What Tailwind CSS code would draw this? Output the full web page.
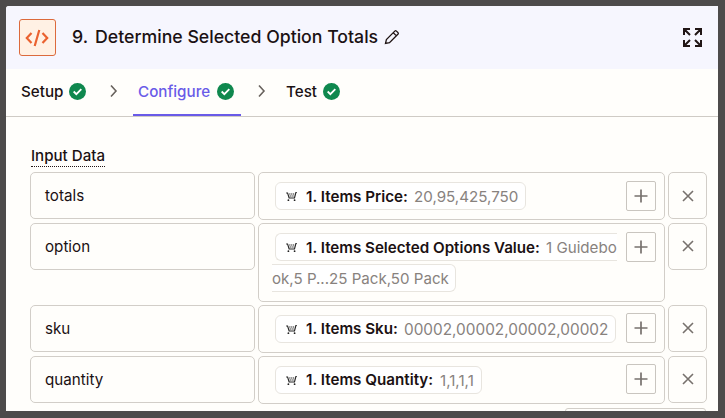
<!DOCTYPE html>
<html lang="en">
<head>
<meta charset="utf-8">
<title>Determine Selected Option Totals</title>
<script src="https://cdn.jsdelivr.net/npm/@tailwindcss/browser@4"></script>
</head>
<body class="bg-[#4d4b4b] font-['Inter',sans-serif] text-[#1b1113]">
<svg class="hidden">
  <symbol id="check" viewBox="0 0 16 16"><circle cx="8" cy="8" r="8" fill="#0f884e"/><path d="M4.4 8l2.5 2.5 4.7-4.7" fill="none" stroke="#fff" stroke-width="1.7"/></symbol>
  <symbol id="chev" viewBox="0 0 8 14"><path d="M1 1.5L6 7l-5 5.5" fill="none" stroke="#68625d" stroke-width="1.6"/></symbol>
  <symbol id="cart" viewBox="0 0 12 12"><path d="M.2 3h1.4l1.5 5h5.4l1.4-5.5h.9" fill="none" stroke="#222" stroke-width="1.1"/><path d="M3.2 4h5M3.6 6h4.6" stroke="#222" stroke-width="1.2" stroke-dasharray="1.3 .6"/><circle cx="2.4" cy="10.2" r=".9" fill="#222"/><circle cx="8.6" cy="10.2" r=".9" fill="#222"/></symbol>
  <symbol id="plus" viewBox="0 0 14 14"><path d="M7 .5v13M.5 7h13" stroke="#77716d" stroke-width="1.7"/></symbol>
  <symbol id="cross" viewBox="0 0 12 12"><path d="M1 1l10 10M11 1L1 11" stroke="#77716d" stroke-width="1.6"/></symbol>
</svg>
<div class="w-[725px] h-[418px] overflow-hidden p-[6px]">
<main class="w-[712px] h-[405px] overflow-hidden bg-[#fffefb] rounded-tl-[3px]">
  <header class="h-[63px] bg-[#f6f6fe] flex items-center pl-[13px] pr-[16px]">
    <div class="w-[37px] h-[37px] rounded-[3px] border border-[#dc6a3c] bg-[#fff1e4] flex items-center justify-center pr-px">
      <svg class="w-6 h-[18px]" viewBox="0 0 24 18" fill="none" stroke="#ea6230" stroke-width="2.2"><path d="M6.5 4L1.8 9l4.7 5M17.5 4l4.7 5-4.7 5M14.3 1L9.7 17"/></svg>
    </div>
    <h1 class="ml-4 w-[306px] shrink-0 text-[17.7px] font-medium whitespace-nowrap flex gap-[7px] leading-6 pb-px"><span>9.</span><span>Determine Selected Option Totals</span></h1>
    <svg class="ml-[6px] mb-[2px] w-4 h-4" viewBox="0 0 16 16" fill="none" stroke="#201515" stroke-width="1.3"><path d="M1.5 14.5l.9-4L11 1.9q.6-.5 1.2 0l1.9 1.9q.5.6 0 1.2l-8.6 8.6zM9.3 3.7l2.9 2.9"/></svg>
    <svg class="ml-auto w-[19px] h-[19px]" viewBox="0 0 19 19" fill="none" stroke="#201515" stroke-width="2"><path d="M1 7V1h6M1 1l6 6M12 1h6v6M18 1l-6 6M1 12v6h6M1 18l6-6M18 12v6h-6M18 18l-6-6"/></svg>
  </header>
  <nav class="h-12 border-b border-[#cfcbc5] flex items-start text-[15.2px] font-medium leading-[45px]">
    <div class="flex items-center pl-[15px] w-[106px] h-[45px]"><span class="w-[43px]">Setup</span><svg class="ml-[5px] w-[17px] h-[17px]"><use href="#check"/></svg></div>
    <svg class="w-2 h-[14px] mt-[15px] -ml-[2px]"><use href="#chev"/></svg>
    <div class="ml-[15px] flex items-center px-[6px] w-[108px] h-[47px] border-b-2 border-[#695be8] text-[#695be8]"><span class="w-[73px] -ml-px mr-px">Configure</span><svg class="ml-[5px] w-[17px] h-[17px]"><use href="#check"/></svg></div>
    <svg class="w-2 h-[14px] mt-[15px] ml-[17px]"><use href="#chev"/></svg>
    <div class="ml-5 h-[45px] flex items-center"><span class="w-[31px]">Test</span><svg class="ml-[6px] w-[17px] h-[17px]"><use href="#check"/></svg></div>
  </nav>
  <section class="pl-6 pt-[29px] text-[15.15px]">
    <h2 class="ml-px w-[74px] h-[21px] leading-[20px] text-[15.1px] font-medium border-b border-dotted border-[#201515] whitespace-nowrap">Input Data</h2>
    <div class="mt-[5px] flex flex-col gap-[3px]">
      <div class="flex items-start gap-[3px]">
        <div class="w-[225px] h-[47px] rounded-[5px] border border-[#d2cec8] pl-[14px] leading-[46px] text-[15.2px]">totals</div>
        <div class="w-[407px] h-[48px] rounded-[5px] border border-[#d2cec8] flex justify-between pl-4 pr-2 pt-2">
          <div class="mt-px h-7 w-[251px] rounded-[6px] border border-[#e8e5df] bg-white flex items-center pl-[10px] whitespace-nowrap"><svg class="w-3 h-3 shrink-0"><use href="#cart"/></svg><b class="ml-2 w-[102px] shrink-0 pt-[2px] text-[15.2px] font-semibold">1. Items Price:</b><span class="ml-[6px] pt-[2px] text-[#88827e]">20,95,425,750</span></div>
          <div class="w-[30px] h-[30px] rounded-[2px] border border-[#c9c5bf] flex items-center justify-center"><svg class="w-[14px] h-[14px]"><use href="#plus"/></svg></div>
        </div>
        <div class="w-[39px] h-[47px] rounded-[5px] border border-[#d2cec8] flex items-center justify-center"><svg class="w-3 h-3"><use href="#cross"/></svg></div>
      </div>
      <div class="flex items-start gap-[3px]">
        <div class="w-[225px] h-[47px] rounded-[5px] border border-[#d2cec8] pl-[14px] leading-[46px] text-[15.2px]">option</div>
        <div class="w-[407px] h-[79px] rounded-[5px] border border-[#d2cec8] flex justify-between pl-[13px] pr-2 pt-2">
          <div class="pt-px flex flex-col gap-[3px]">
            <div class="ml-[3px] h-7 w-[342px] rounded-l-[6px] border border-r-0 border-[#e8e5df] bg-white flex items-center pl-[10px] whitespace-nowrap"><svg class="w-3 h-3 shrink-0"><use href="#cart"/></svg><b class="ml-2 w-[234px] shrink-0 pt-[2px] text-[15.15px] font-semibold">1. Items Selected Options Value:</b><span class="ml-[6px] pt-[2px] text-[#88827e]">1 Guidebo</span></div>
            <div class="h-7 w-[184px] rounded-r-[6px] border border-l-0 border-[#e8e5df] bg-white flex items-center whitespace-nowrap pt-[2px] text-[15.1px] text-[#88827e]">ok,5 P...25 Pack,50 Pack</div>
          </div>
          <div class="w-[30px] h-[30px] rounded-[2px] border border-[#c9c5bf] flex items-center justify-center pb-px"><svg class="w-[14px] h-[14px]"><use href="#plus"/></svg></div>
        </div>
        <div class="w-[39px] h-[47px] rounded-[5px] border border-[#d2cec8] flex items-center justify-center pb-px"><svg class="w-3 h-3"><use href="#cross"/></svg></div>
      </div>
      <div class="flex items-start gap-[3px]">
        <div class="w-[225px] h-[47px] rounded-[5px] border border-[#d2cec8] pl-[14px] leading-[46px] text-[15.2px]">sku</div>
        <div class="w-[407px] h-[48px] rounded-[5px] border border-[#d2cec8] flex justify-between pl-4 pr-2 pt-[7px]">
          <div class="mt-[2px] h-7 w-[341px] rounded-[6px] border border-[#e8e5df] bg-white flex items-center pl-[10px] whitespace-nowrap"><svg class="w-3 h-3 shrink-0"><use href="#cart"/></svg><b class="ml-2 w-[92px] shrink-0 text-[15.2px] font-semibold">1. Items Sku:</b><span class="ml-[6px] pt-[2px] text-[15.35px] text-[#88827e]">00002,00002,00002,00002</span></div>
          <div class="w-[30px] h-[30px] rounded-[2px] border border-[#c9c5bf] flex items-center justify-center"><svg class="w-[14px] h-[14px]"><use href="#plus"/></svg></div>
        </div>
        <div class="w-[39px] h-[47px] rounded-[5px] border border-[#d2cec8] flex items-center justify-center pb-px"><svg class="w-3 h-3"><use href="#cross"/></svg></div>
      </div>
      <div class="flex items-start gap-[3px]">
        <div class="w-[225px] h-[47px] rounded-[5px] border border-[#d2cec8] pl-[14px] leading-[46px] text-[15.2px]">quantity</div>
        <div class="w-[407px] h-[48px] rounded-[5px] border border-[#d2cec8] flex justify-between pl-4 pr-2 pt-[7px]">
          <div class="mt-[2px] h-7 w-[207px] rounded-[6px] border border-[#e8e5df] bg-white flex items-center pl-[10px] whitespace-nowrap"><svg class="w-3 h-3 shrink-0"><use href="#cart"/></svg><b class="ml-2 w-[128px] shrink-0 text-[15.2px] font-semibold">1. Items Quantity:</b><span class="ml-[6px] pt-[2px] text-[#88827e]">1,1,1,1</span></div>
          <div class="w-[30px] h-[30px] rounded-[2px] border border-[#c9c5bf] flex items-center justify-center"><svg class="w-[14px] h-[14px]"><use href="#plus"/></svg></div>
        </div>
        <div class="w-[39px] h-[47px] rounded-[5px] border border-[#d2cec8] flex items-center justify-center pb-px"><svg class="w-3 h-3"><use href="#cross"/></svg></div>
      </div>
    </div>
    <div class="mt-1 ml-[535px] w-[141px] h-10 rounded-[3px] border border-[#d2cec8]"></div>
  </section>
</main>
</div>
</body>
</html>
